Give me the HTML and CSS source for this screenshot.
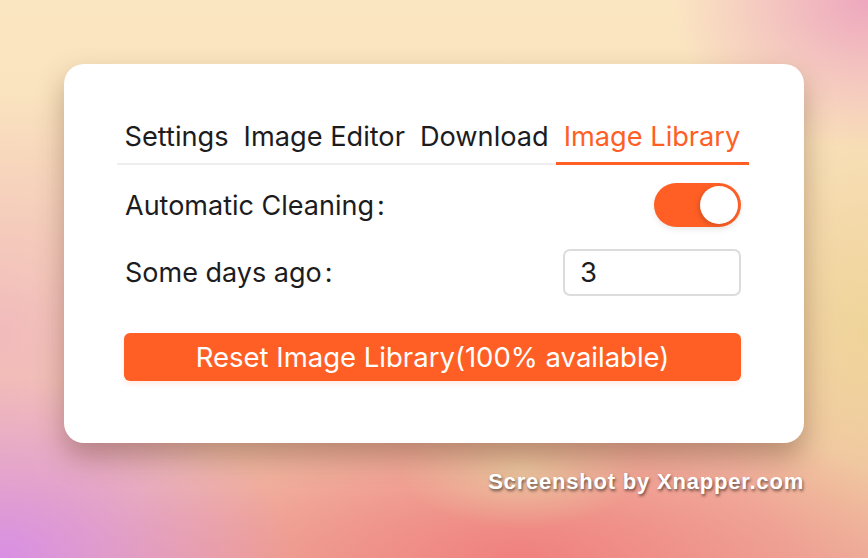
FILE: index.html
```html
<!DOCTYPE html>
<html>
<head>
	<title>Image Library Settings</title>
	<link rel="stylesheet" href="styles.css">
</head>
<body>
	<div class="stage">
		<section class="card">
			<nav class="tabs">
				<span class="tab">Settings</span>
				<span class="tab">Image Editor</span>
				<span class="tab">Download</span>
				<span class="tab active">Image Library</span>
			</nav>
			<div class="row">
				<label>Automatic Cleaning<span class="colon">:</span></label>
				<div class="toggle on"><span class="knob"></span></div>
			</div>
			<div class="row">
				<label>Some days ago<span class="colon">:</span></label>
				<input class="days" type="text" value="3">
			</div>
			<button class="reset">Reset Image Library(100% available)</button>
		</section>
		<p class="credit">Screenshot by Xnapper.com</p>
	</div>
</body>
</html>
```

FILE: styles.css
```css
/* General styles */
html, body {
	margin: 0;
	padding: 0;
	height: 100%;
}

body {
	font-family: Inter, "Noto Sans", sans-serif;
	overflow: hidden;
}

.stage {
	width: 868px;
	height: 558px;
	box-sizing: border-box;
	padding: 64px 64px 0 64px;
	background:
		radial-gradient(ellipse 420px 260px at 0% 100%, rgba(214, 140, 236, 0.9), rgba(214, 140, 236, 0) 70%),
		radial-gradient(ellipse 260px 200px at 100% 0%, rgba(236, 160, 190, 0.9), rgba(236, 160, 190, 0) 75%),
		radial-gradient(ellipse 120px 60px at 60% 84%, rgba(232, 205, 160, 0.8), rgba(232, 205, 160, 0) 100%),
		radial-gradient(ellipse 520px 200px at 60% 100%, rgba(240, 120, 120, 0.85), rgba(240, 120, 120, 0) 80%),
		radial-gradient(ellipse 200px 300px at 100% 60%, rgba(238, 212, 150, 0.9), rgba(238, 212, 150, 0) 80%),
		radial-gradient(ellipse 300px 300px at 0% 60%, rgba(240, 180, 190, 0.8), rgba(240, 180, 190, 0) 80%),
		linear-gradient(180deg, #fbe6c2 0%, #f8dcb8 50%, #eeb09e 100%);
}

/* Card */
.card {
	width: 740px;
	height: 379px;
	box-sizing: border-box;
	background: #fff;
	border-radius: 20px;
	box-shadow: 0 14px 28px rgba(80, 40, 20, 0.35);
	padding: 48px 53px 0 53px;
}

/* Tabs */
.tabs {
	display: inline-flex;
	border-bottom: 2px solid #eeeeee;
	margin-bottom: 12px;
	white-space: nowrap;
}

.tab {
	flex-shrink: 0;
	font-size: 27.2px;
	line-height: 33px;
	color: #1c1c1e;
	padding: 8px 7.5px 12px 7.5px;
	margin-bottom: -2px;
}

.tab.active {
	color: #ff5f25;
	border-bottom: 3px solid #ff5f25;
	padding-bottom: 9px;
	padding-right: 9px;
}

/* Rows */
.row {
	display: flex;
	align-items: center;
	justify-content: space-between;
	padding: 0 10px 0 8px;
	height: 56px;
	margin-bottom: 11px;
}

.row label {
	font-size: 27px;
	color: #1c1c1e;
	white-space: nowrap;
}

.colon {
	margin-left: 3px;
}

.toggle {
	width: 87px;
	height: 44px;
	border-radius: 22px;
	background: #ff5f25;
	box-sizing: border-box;
	padding: 3px;
	display: flex;
	justify-content: flex-end;
	box-shadow: 0 3px 6px rgba(0, 0, 0, 0.08);
}

.knob {
	width: 38px;
	height: 38px;
	border-radius: 50%;
	background: #fff;
	box-shadow: -2px 2px 4px rgba(0, 0, 0, 0.15);
}

.days {
	width: 178px;
	height: 47px;
	box-sizing: border-box;
	border: 2px solid #dcdcdc;
	border-radius: 7px;
	padding: 0 15px;
	font-family: Inter, "Noto Sans", sans-serif;
	font-size: 27.5px;
	color: #1c1c1e;
	outline: none;
}

/* Button */
.reset {
	display: block;
	width: 617px;
	height: 48px;
	margin: 33px 0 0 7px;
	border: none;
	border-radius: 6px;
	background: #ff5f25;
	color: #fff;
	font-family: Inter, "Noto Sans", sans-serif;
	font-size: 27.5px;
	white-space: nowrap;
	box-shadow: 0 3px 5px rgba(255, 95, 37, 0.12);
}

/* Watermark */
.credit {
	margin: 26px 0 0 0;
	width: 740px;
	text-align: right;
	font-family: "Liberation Sans", Arial, sans-serif;
	font-weight: bold;
	font-size: 22px;
	letter-spacing: 0.8px;
	color: #fff;
	text-shadow: 1px 2px 3px rgba(0, 0, 0, 0.55);
}
```
